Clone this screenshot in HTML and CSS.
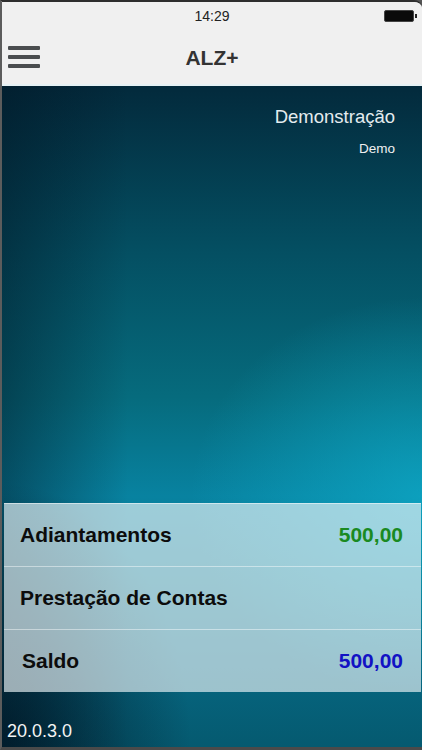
FILE: index.html
```html
<!DOCTYPE html>
<html lang="pt">
<head>
<meta charset="utf-8">
<title>ALZ+</title>
<link rel="stylesheet" href="styles.css">
</head>
<body>
<div class="frame">
  <div class="status">
    <span class="time">14:29</span>
    <span class="battery"><span class="nub"></span></span>
  </div>
  <div class="nav">
    <div class="menu">
      <span class="bar"></span><span class="bar"></span><span class="bar"></span>
    </div>
    <div class="title">ALZ+</div>
  </div>
  <div class="main">
    <div class="company">
      <div class="cname">Demonstração</div>
      <div class="csub">Demo</div>
    </div>
    <div class="card">
      <div class="row"><span class="label">Adiantamentos</span><span class="val green">500,00</span></div>
      <div class="row"><span class="label">Prestação de Contas</span></div>
      <div class="row"><span class="label indent">Saldo</span><span class="val blue">500,00</span></div>
    </div>
    <div class="footer">20.0.3.0</div>
  </div>
</div>
</body>
</html>
```
FILE: styles.css
```css
html, body {
  margin: 0;
  padding: 0;
}
body {
  width: 422px;
  height: 750px;
  overflow: hidden;
  background: #555;
  font-family: "Liberation Sans", Arial, sans-serif;
}
.frame {
  box-sizing: border-box;
  width: 422px;
  height: 750px;
  border-top: 2px solid #2e2e2e;
  border-left: 2px solid #5c5c5c;
  border-bottom: 3px solid #4a4a4a;
  border-top-right-radius: 8px;
  overflow: hidden;
  display: flex;
  flex-direction: column;
  background: #f0f0f0;
}
.status {
  height: 28px;
  background: #f0f0f0;
  display: flex;
  align-items: center;
  justify-content: center;
  position: relative;
}
.time {
  font-size: 14px;
  color: #222;
  margin-left: 0;
}
.battery {
  position: absolute;
  right: 8px;
  top: 8px;
  width: 28px;
  height: 10px;
  background: #0a0a0a;
  border: 1px solid #444;
  border-radius: 2px;
}
.battery .nub {
  position: absolute;
  right: -4px;
  top: 3px;
  width: 2px;
  height: 4px;
  background: #222;
}
.nav {
  height: 54px;
  background: #f0f0f0;
  border-bottom: 2px solid #e6f1f4;
  display: flex;
  align-items: center;
  position: relative;
}
.menu {
  position: absolute;
  left: 6px;
  top: 16px;
  width: 32px;
  display: flex;
  flex-direction: column;
  gap: 5px;
}
.bar {
  display: block;
  height: 4px;
  background: #4a4d4f;
  border-radius: 1px;
}
.title {
  flex: 1;
  text-align: center;
  font-size: 21px;
  font-weight: bold;
  color: #333;
  margin-left: 0;
  margin-top: 2px;
}
.main {
  flex: 1;
  display: flex;
  flex-direction: column;
  background:
    radial-gradient(ellipse 45% 40% at 0% 100%, rgba(1, 16, 30, 0.7) 0%, rgba(1, 16, 30, 0) 100%),
    linear-gradient(to right, rgba(1, 18, 32, 0.45) 0%, rgba(1, 18, 32, 0) 30%),
    radial-gradient(ellipse 55% 30% at 100% 62%, rgba(14, 172, 202, 0.7) 0%, rgba(14, 172, 202, 0) 100%),
    linear-gradient(to bottom, #032a3c 0%, #044f62 25%, #066b7d 47%, #0882a0 62%, #07748c 76%, #066680 88%, #055a70 100%);
}
.company {
  padding: 20px 27px 0 0;
  text-align: right;
  color: #e4ecef;
}
.cname {
  font-size: 18.5px;
  line-height: 21px;
}
.csub {
  font-size: 13.5px;
  line-height: 15px;
  margin-top: 14px;
  color: #f0f0f0;
}
.card {
  margin: auto 1px 0 2px;
  background: rgba(235, 245, 248, 0.66);
  border-top: 1px solid rgba(255, 255, 255, 0.5);
}
.row {
  height: 62px;
  display: flex;
  align-items: center;
  justify-content: space-between;
  padding: 0 18px 0 16px;
  border-top: 1px solid rgba(255, 255, 255, 0.45);
}
.row:first-child {
  border-top: none;
}
.label {
  font-size: 21px;
  font-weight: bold;
  color: #0c0c0c;
}
.label.indent {
  padding-left: 2px;
}
.val {
  font-size: 21px;
  font-weight: bold;
}
.green { color: #1a8a22; }
.blue { color: #1212c4; }
.footer {
  height: 55px;
  box-sizing: border-box;
  padding: 29px 0 0 5px;
  font-size: 18px;
  line-height: 20px;
  color: #f4f4f4;
}
```
